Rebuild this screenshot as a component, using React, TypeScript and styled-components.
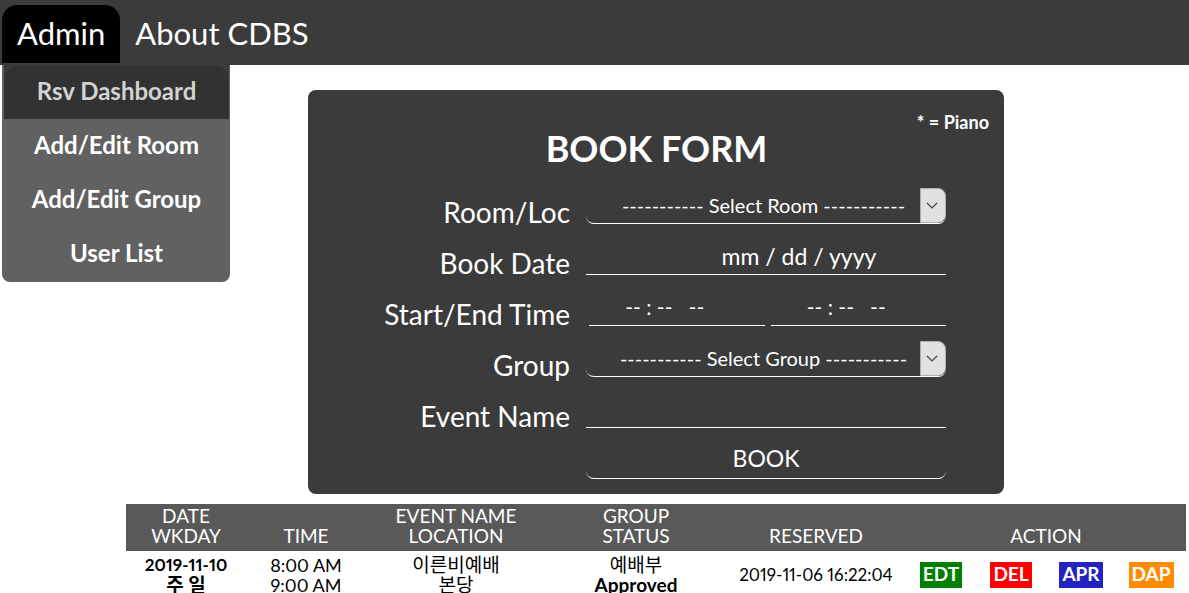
import React from "react";
import styled, { createGlobalStyle, css } from "styled-components";

const Global = createGlobalStyle`
  * { box-sizing: border-box; }
  html { scrollbar-width: none; }
  body {
    margin: 0;
    background: #fff;
    color: #000;
    font-family: Lato, "Noto Sans CJK KR", sans-serif;
  }
  input, select, button { font: inherit; color: inherit; }
`;

const NavBar = styled.nav`
  height: 65px;
  padding: 5px 2px 2px;
  background: #3b3b3b;
`;

const NavList = styled.ul`
  display: flex;
  height: 100%;
  margin: 0;
  padding: 0;
  list-style: none;
`;

const NavItem = styled.li`
  position: relative;
`;

const NavLink = styled.a<{ $active?: boolean }>`
  display: block;
  height: 58px;
  padding: 0 15px;
  border-radius: 15px 15px 0 0;
  background: ${(p) => (p.$active ? "#000" : "transparent")};
  color: #fff;
  font-size: 31px;
  line-height: 56px;
  white-space: nowrap;
  text-decoration: none;
`;

const Menu = styled.ul`
  position: absolute;
  top: 60px;
  left: 0;
  width: 228px;
  margin: 0;
  padding: 0 1px 1px 2px;
  border-radius: 0 0 8px 8px;
  background: #616161;
  list-style: none;
`;

const MenuEntry = styled.li<{ $current?: boolean }>`
  background: ${(p) => (p.$current ? "#3b3b3b" : "transparent")};
`;

const MenuLink = styled.a<{ $current?: boolean }>`
  display: block;
  padding-bottom: 2px;
  color: #fff;
  font-size: 24px;
  font-weight: 700;
  line-height: 52px;
  text-align: center;
  text-decoration: none;
  ${(p) =>
    p.$current &&
    css`
      border-radius: 15px 15px 0 0;
      background: #323232;
      color: #d3d3d3;
    `}
`;

const Main = styled.main`
  padding: 25px 3px 0 126px;
`;

const BookForm = styled.form`
  display: flex;
  flex-direction: column;
  gap: 15px;
  max-width: 696px;
  margin: 0 auto 10px;
  padding: 22px 58px 15px 16px;
  border-radius: 8px;
  background: #3b3b3b;
  color: #fff;
`;

const FormHead = styled.header`
  display: flex;
  flex-direction: column;
  height: 61px;
  margin-right: -43px;
`;

const Note = styled.p`
  margin: 0;
  font-size: 18px;
  font-weight: 700;
  line-height: 20px;
  text-align: right;
`;

const Title = styled.h1`
  margin: 0;
  font-size: 36px;
  font-weight: 700;
  line-height: 32px;
  text-align: center;
`;

const Row = styled.div`
  display: grid;
  grid-template-columns: 1fr 360px;
  column-gap: 16px;
  height: 36px;
`;

const Label = styled.label`
  padding-top: 8px;
  font-size: 28px;
  line-height: 32px;
  text-align: right;
`;

const underline = css`
  width: 100%;
  height: 36px;
  border: 0;
  border-bottom: 1px solid #fff;
  background: transparent;
  outline: 0;
  text-align: center;
`;

const Input = styled.input<{ $kind?: "date" | "time" }>`
  ${underline}
  padding: 0 0 2px;
  font-size: 23px;
  ${(p) => p.$kind === "date" && "padding-left: 66px;"}
  ${(p) => p.$kind === "time" && "padding-right: 24px; font-size: 21px;"}
  &::placeholder { color: #fff; opacity: 1; }
`;

const TimePair = styled.div`
  display: grid;
  grid-template-columns: 1fr 1fr;
  gap: 6px;
  padding-left: 3px;
`;

const SelectBox = styled.div`
  position: relative;
`;

const Select = styled.select`
  ${underline}
  appearance: none;
  padding: 0 26px 2px 21px;
  border-radius: 8px;
  font-size: 20px;
  text-align-last: center;
`;

const Arrow = styled.span`
  position: absolute;
  top: 0;
  right: 0;
  display: grid;
  place-items: center;
  width: 26px;
  height: 35px;
  padding-right: 2px;
  border: 1px solid #adadad;
  border-radius: 0 8px 8px 0;
  background: #e1e1e1;
  pointer-events: none;
`;

const Submit = styled.button`
  ${underline}
  grid-column: 2;
  padding: 0 0 6px;
  border-radius: 8px;
  font-size: 23px;
`;

const Table = styled.table`
  width: 100%;
  border-collapse: collapse;
  table-layout: fixed;
  font-size: 19px;
  line-height: 20px;
  text-align: center;
`;

const Th = styled.th`
  padding: 2px 0 5px;
  background: #595959;
  color: #fff;
  font-weight: 400;
  vertical-align: bottom;
`;

const Td = styled.td`
  height: 48px;
  padding: 3px 0 5px;
  font-variant-numeric: proportional-nums;
`;

const Stamp = styled.time`
  font-size: 17px;
  white-space: nowrap;
`;

const Hours = styled.span`
  font-size: 18px;
`;

const Action = styled.button<{ $color: string }>`
  padding: 2px 3px 4px;
  border: 0;
  background: ${(p) => p.$color};
  color: #fff;
  font-size: 19px;
  font-weight: 700;
  line-height: 20px;
`;

const menu = ["Rsv Dashboard", "Add/Edit Room", "Add/Edit Group", "User List"];

const widths = [120, 120, 180, 180, 180, 70, 70, 70, 70];

const actions = [
  ["EDT", "#008000"],
  ["DEL", "#ff0000"],
  ["APR", "#2323c1"],
  ["DAP", "#ff8c00"],
];

function Picker({ id, text }: { id: string; text: string }) {
  return (
    <SelectBox>
      <Select id={id}>
        <option>{text}</option>
      </Select>
      <Arrow>
        <svg width="12" height="8" viewBox="0 0 12 8" fill="none" stroke="#444" strokeWidth="1.2">
          <path d="M1 1l5 5 5-5" />
        </svg>
      </Arrow>
    </SelectBox>
  );
}

export default function App() {
  return (
    <>
      <Global />
      <NavBar>
        <NavList>
          <NavItem>
            <NavLink href="#admin" $active>Admin</NavLink>
            <Menu>
              {menu.map((item, i) => (
                <MenuEntry key={item} $current={i === 0}>
                  <MenuLink href="#menu" $current={i === 0}>{item}</MenuLink>
                </MenuEntry>
              ))}
            </Menu>
          </NavItem>
          <NavItem>
            <NavLink href="#about">About CDBS</NavLink>
          </NavItem>
        </NavList>
      </NavBar>
      <Main>
        <BookForm onSubmit={(e) => e.preventDefault()}>
          <FormHead>
            <Note>* = Piano</Note>
            <Title>BOOK FORM</Title>
          </FormHead>
          <Row>
            <Label htmlFor="room">Room/Loc</Label>
            <Picker id="room" text="----------- Select Room -----------" />
          </Row>
          <Row>
            <Label htmlFor="date">Book Date</Label>
            <Input id="date" placeholder="mm / dd / yyyy" $kind="date" />
          </Row>
          <Row>
            <Label htmlFor="start">Start/End Time</Label>
            <TimePair>
              <Input id="start" placeholder="-- : --   --" $kind="time" />
              <Input aria-label="End time" placeholder="-- : --   --" $kind="time" />
            </TimePair>
          </Row>
          <Row>
            <Label htmlFor="group">Group</Label>
            <Picker id="group" text="----------- Select Group -----------" />
          </Row>
          <Row>
            <Label htmlFor="event">Event Name</Label>
            <Input id="event" />
          </Row>
          <Row>
            <Submit type="submit">BOOK</Submit>
          </Row>
        </BookForm>
        <Table>
          <colgroup>
            {widths.map((w, i) => (
              <col key={i} width={w} />
            ))}
          </colgroup>
          <thead>
            <tr>
              <Th>DATE<br />WKDAY</Th>
              <Th>TIME</Th>
              <Th>EVENT NAME<br />LOCATION</Th>
              <Th>GROUP<br />STATUS</Th>
              <Th>RESERVED</Th>
              <Th colSpan={4}>ACTION</Th>
            </tr>
          </thead>
          <tbody>
            <tr>
              <Td><b><Stamp>2019-11-10</Stamp><br />주 일</b></Td>
              <Td><Hours>8:00 AM<br />9:00 AM</Hours></Td>
              <Td>이른비예배<br />본당</Td>
              <Td>예배부<br /><b>Approved</b></Td>
              <Td><Stamp>2019-11-06 16:22:04</Stamp></Td>
              {actions.map(([name, color]) => (
                <Td key={name}>
                  <Action type="button" $color={color}>{name}</Action>
                </Td>
              ))}
            </tr>
          </tbody>
        </Table>
      </Main>
    </>
  );
}
